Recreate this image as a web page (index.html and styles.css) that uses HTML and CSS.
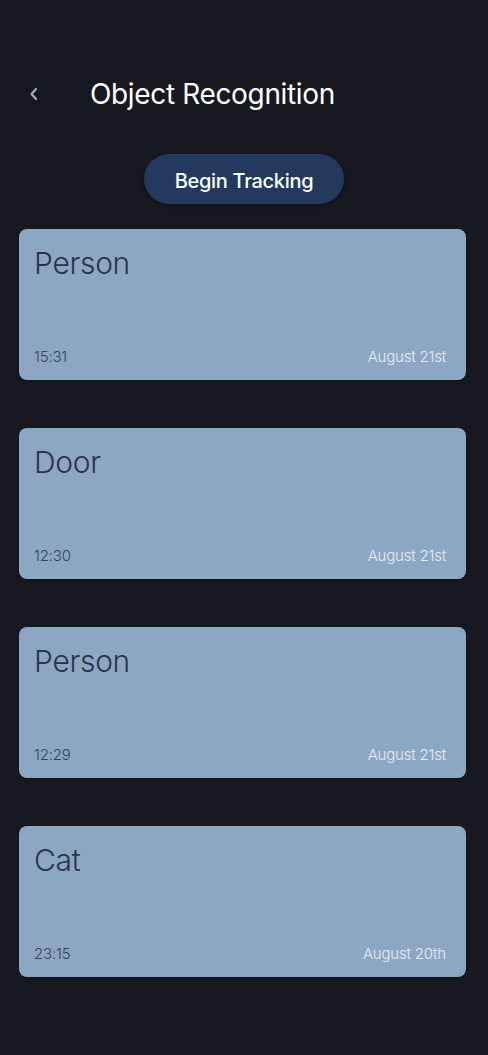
FILE: index.html
```html
<!DOCTYPE html>
<html>
<head>
<meta charset="utf-8">
<link rel="stylesheet" href="styles.css">
</head>
<body>
<div class="screen">
  <header class="topbar">
    <button class="back" aria-label="Back">
      <svg width="12" height="16" viewBox="0 0 12 16"><path d="M8 3 L3.5 8 L8 13" fill="none" stroke="#a3a8c6" stroke-width="2.2" stroke-linecap="round" stroke-linejoin="round"/></svg>
    </button>
    <h1 class="title">Object Recognition</h1>
  </header>
  <div class="action">
    <button class="track">Begin Tracking</button>
  </div>
  <div class="list">
    <div class="card">
      <div class="name">Person</div>
      <div class="meta"><span class="time">15:31</span><span class="date">August 21st</span></div>
    </div>
    <div class="card">
      <div class="name">Door</div>
      <div class="meta"><span class="time">12:30</span><span class="date">August 21st</span></div>
    </div>
    <div class="card">
      <div class="name">Person</div>
      <div class="meta"><span class="time">12:29</span><span class="date">August 21st</span></div>
    </div>
    <div class="card">
      <div class="name">Cat</div>
      <div class="meta"><span class="time">23:15</span><span class="date">August 20th</span></div>
    </div>
  </div>
</div>
</body>
</html>
```

FILE: styles.css
```css
html, body {
  margin: 0;
  padding: 0;
  background: #181920;
}
.screen {
  width: 488px;
  height: 1055px;
  background: #181920;
  font-family: "Inter", "Noto Sans", sans-serif;
  box-sizing: border-box;
  padding-top: 70px;
}
.topbar {
  display: flex;
  align-items: center;
  height: 48px;
  padding-left: 26px;
}
.back {
  width: 16px;
  height: 24px;
  padding: 0;
  border: 0;
  background: none;
  display: flex;
  align-items: center;
  justify-content: center;
}
.title {
  margin: 0 0 0 48px;
  font-size: 28px;
  font-weight: 400;
  color: #ffffff;
  letter-spacing: -0.35px;
}
.action {
  display: flex;
  justify-content: center;
  margin-top: 36px;
}
.track {
  width: 200px;
  height: 50px;
  border: 0;
  border-radius: 25px;
  background: #233a5e;
  color: #ffffff;
  font-family: inherit;
  font-size: 20px;
  font-weight: 500;
  letter-spacing: -0.3px;
  padding: 3px 0 0;
  box-shadow: 0 2px 4px rgba(0,0,0,0.35);
}
.list {
  display: flex;
  flex-direction: column;
  gap: 48px;
  padding: 25px 22px 0 19px;
}
.card {
  height: 151px;
  background: #8ca7c4;
  border-radius: 8px;
  box-sizing: border-box;
  padding: 16px 20px 14px 15px;
  display: flex;
  flex-direction: column;
  justify-content: space-between;
  box-shadow: 0 1px 2px rgba(0,0,0,0.3);
}
.name {
  font-size: 30px;
  font-weight: 300;
  color: #2c3447;
  letter-spacing: -0.3px;
}
.meta {
  display: flex;
  justify-content: space-between;
  align-items: baseline;
  font-size: 15px;
  font-weight: 300;
  letter-spacing: -0.2px;
}
.time { color: #3a4256; }
.date { color: #e6ebf3; }
```
